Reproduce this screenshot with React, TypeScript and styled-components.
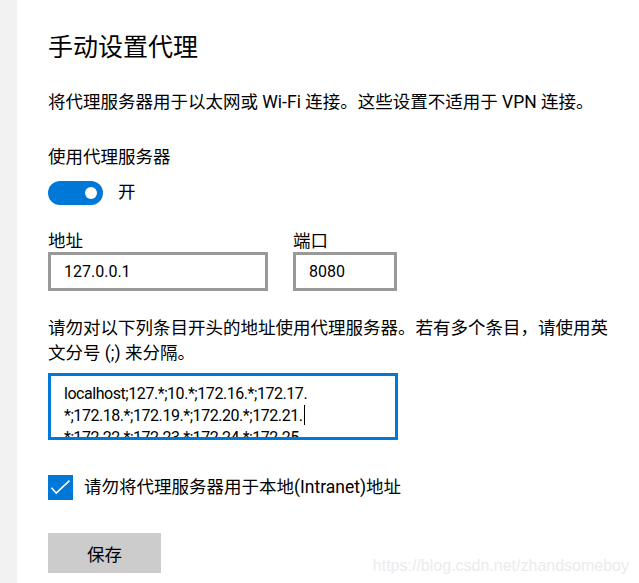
import styled, { createGlobalStyle } from "styled-components";

const GlobalStyle = createGlobalStyle`
  html, body, #root {
    margin: 0;
    height: 100%;
  }
  body {
    background: #ffffff;
    color: #000000;
    font-family: Roboto, "Noto Sans CJK SC", sans-serif;
    overflow: hidden;
  }
`;

const exclusions = [
  "localhost;127.*;10.*;172.16.*;172.17.",
  "*;172.18.*;172.19.*;172.20.*;172.21.",
  "*;172.22.*;172.23.*;172.24.*;172.25.",
];

function App() {
  return (
    <>
      <GlobalStyle />
      <StyledPage>
        <StyledSide />
        <StyledMain>
          <StyledTitle>手动设置代理</StyledTitle>
          <StyledText>将代理服务器用于以太网或 Wi-Fi 连接。这些设置不适用于 VPN 连接。</StyledText>

          <StyledSubTitle>使用代理服务器</StyledSubTitle>
          <StyledToggleRow>
            <StyledToggle aria-checked="true" role="switch">
              <StyledThumb />
            </StyledToggle>
            <StyledText>开</StyledText>
          </StyledToggleRow>

          <StyledFields>
            <StyledField>
              <StyledLabel>地址</StyledLabel>
              <StyledInput $width={220} defaultValue="127.0.0.1" />
            </StyledField>
            <StyledField>
              <StyledLabel>端口</StyledLabel>
              <StyledInput $width={104} defaultValue="8080" />
            </StyledField>
          </StyledFields>

          <StyledHint>
            请勿对以下列条目开头的地址使用代理服务器。若有多个条目，请使用英文分号 (;) 来分隔。
          </StyledHint>

          <StyledTextBox>
            {exclusions.map((line, i) => (
              <StyledLine key={i}>
                {line}
                {i === 1 && <StyledCaret />}
              </StyledLine>
            ))}
          </StyledTextBox>

          <StyledCheckRow>
            <StyledCheck>
              <svg width="25" height="25" viewBox="0 0 25 25">
                <polyline
                  points="3.5,12.8 8.2,18.2 21.5,5.6"
                  fill="none"
                  stroke="#ffffff"
                  strokeWidth="1.6"
                />
              </svg>
            </StyledCheck>
            <StyledText>请勿将代理服务器用于本地(Intranet)地址</StyledText>
          </StyledCheckRow>

          <StyledBtn>保存</StyledBtn>
        </StyledMain>
        <StyledMark>https://blog.csdn.net/zhandsomeboy</StyledMark>
      </StyledPage>
    </>
  );
}

const StyledPage = styled.div`
  position: relative;
  display: flex;
  height: 100%;
`;

const StyledSide = styled.div`
  width: 17px;
  flex-shrink: 0;
  background: #f2f2f2;
`;

const StyledMain = styled.div`
  display: flex;
  flex-direction: column;
  align-items: flex-start;
  padding: 32px 0 0 31px;
`;

const StyledTitle = styled.h1`
  margin: 0;
  font-size: 25px;
  font-weight: 400;
  line-height: 32px;
`;

const StyledText = styled.p`
  margin: 0;
  font-size: 17.5px;
  line-height: 25px;
  white-space: nowrap;

  ${StyledTitle} + & {
    margin-top: 26px;
  }
`;

const StyledSubTitle = styled.p`
  margin: 30px 0 0;
  font-size: 17.5px;
  line-height: 25px;
`;

const StyledToggleRow = styled.div`
  display: flex;
  align-items: center;
  gap: 15px;
  margin-top: 10px;
`;

const StyledToggle = styled.div`
  position: relative;
  width: 55px;
  height: 24px;
  border-radius: 12px;
  background: #0078d7;
`;

const StyledThumb = styled.span`
  position: absolute;
  right: 6px;
  top: 6px;
  width: 12px;
  height: 12px;
  border-radius: 50%;
  background: #ffffff;
`;

const StyledFields = styled.div`
  display: flex;
  gap: 25px;
  margin-top: 26px;
`;

const StyledField = styled.div`
  display: flex;
  flex-direction: column;
  gap: 1px;
`;

const StyledLabel = styled.label`
  font-size: 17.5px;
  line-height: 20px;
`;

const StyledInput = styled.input<{ $width: number }>`
  box-sizing: border-box;
  width: ${(p) => p.$width}px;
  height: 39px;
  margin: 0;
  padding: 0 13px;
  border: 3px solid #999999;
  border-radius: 0;
  background: #ffffff;
  color: #000000;
  font-family: inherit;
  font-size: 16px;
  outline: none;
`;

const StyledHint = styled.p`
  width: 570px;
  margin: 25px 0 0;
  font-size: 17.5px;
  line-height: 25px;
`;

const StyledTextBox = styled.div`
  box-sizing: border-box;
  width: 350px;
  height: 67px;
  margin-top: 7px;
  padding: 7px 13px 0;
  border: 3px solid #0078d7;
  overflow: hidden;
  font-size: 16px;
  line-height: 22px;
  letter-spacing: -0.45px;
`;

const StyledLine = styled.div`
  white-space: nowrap;
`;

const StyledCaret = styled.span`
  display: inline-block;
  width: 1px;
  height: 20px;
  margin-left: 1px;
  vertical-align: -4px;
  background: #000000;
`;

const StyledCheckRow = styled.div`
  display: flex;
  align-items: center;
  gap: 11px;
  margin-top: 35px;
`;

const StyledCheck = styled.span`
  display: flex;
  width: 25px;
  height: 25px;
  background: #0078d7;
`;

const StyledBtn = styled.button`
  width: 113px;
  height: 40px;
  margin-top: 33px;
  padding: 0;
  border: 0;
  border-radius: 0;
  background: #cccccc;
  color: #000000;
  font-family: inherit;
  font-size: 17.5px;
`;

const StyledMark = styled.div`
  position: absolute;
  right: 10px;
  bottom: 7px;
  font-family: "Liberation Sans", Arial, sans-serif;
  font-size: 16px;
  line-height: 20px;
  color: #ebebeb;
`;

export default App;
